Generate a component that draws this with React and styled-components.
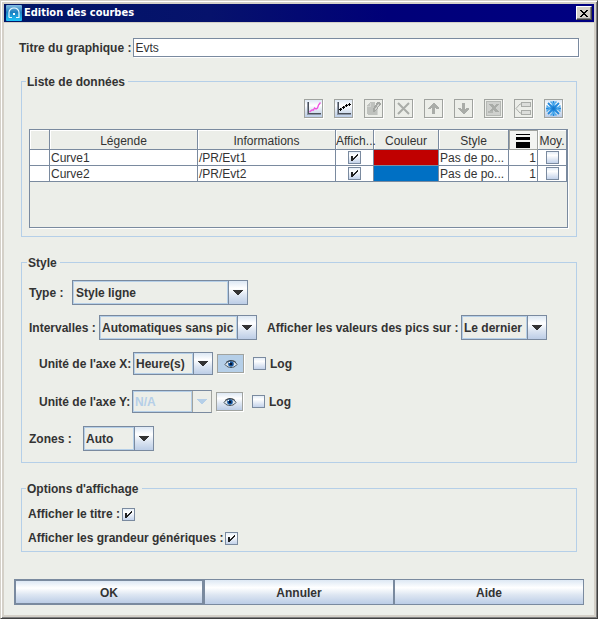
import React, { useState } from "react";
import styled, { createGlobalStyle, css } from "styled-components";

const c = {
  face: "#eceee9",
  frame: "#d4d0c8",
  line: "#7a8a9f",
  soft: "#b5cfe8",
  text: "#333333",
  grey: "#a0a39f",
};

const gloss = "linear-gradient(#dde8f4 0%, #ffffff 32%, #dde6f2 62%, #bccde6 100%)";

const Global = createGlobalStyle`
  * { box-sizing: border-box; }
  body { margin: 0; background: ${c.face}; }
  body, button, input, select {
    font: 700 12px/14px "Liberation Sans", Arial, sans-serif;
    color: ${c.text};
  }
`;

const Window = styled.div`
  min-height: 100vh;
  display: flex;
  flex-direction: column;
  background: ${c.face};
  border: 1px solid ${c.frame};
  border-right-color: #404040;
  border-bottom-color: #404040;
  box-shadow: inset 1px 1px 0 #fff, inset -1px -1px 0 #808080, inset 0 0 0 3px ${c.frame};
  padding: 3px;
`;

const TitleBar = styled.header`
  display: flex;
  align-items: center;
  gap: 2px;
  height: 18px;
  padding: 0 2px;
  color: #fff;
  background: linear-gradient(90deg, #001666 0%, #06126c 35%, #000078 65%, #000082 100%);
`;

const WindowTitle = styled.h1`
  flex: 1;
  margin: 0;
  font: 700 11px/18px "DejaVu Sans Condensed", "DejaVu Sans", sans-serif;
`;

const CloseButton = styled.button`
  display: grid;
  place-items: center;
  width: 16px;
  height: 14px;
  padding: 0;
  border: 1px solid;
  border-color: #fff #404040 #404040 #fff;
  background: ${c.frame};
  box-shadow: inset -1px -1px 0 #808080;
`;

const Body = styled.form`
  flex: 1;
  display: flex;
  flex-direction: column;
  margin: 0;
  padding: 15px 10px 10px;
  border-top: 1px solid ${c.frame};
`;

const TitleRow = styled.div`
  display: flex;
  align-items: center;
  gap: 2px;
  margin: 0 5px 15px;
`;

const TextInput = styled.input`
  flex: 1;
  min-width: 0;
  height: 19px;
  margin-bottom: 1px;
  padding: 0 1px;
  border: 1px solid ${c.line};
  border-radius: 0;
  outline: 0;
  background: #fff;
  box-shadow: 1px 1px 0 #fff;
  font-weight: 400;
`;

const Group = styled.fieldset`
  min-width: 0;
  margin: 0 7px 17px;
  padding: ${(p) => p.$pad};
  border: 1px solid ${c.soft};
`;

const Legend = styled.legend`
  margin-left: ${(p) => p.$inset || 0}px;
  padding: 2px 3px 0 1px;
`;

const Toolbar = styled.div`
  display: flex;
  justify-content: flex-end;
  gap: 11px;
  padding: 0 5px 11px 0;
`;

const IconButton = styled.button`
  display: grid;
  place-items: center;
  width: ${(p) => p.$w || 19}px;
  height: 19px;
  padding: 0;
  border: 1px solid ${c.grey};
  background: ${(p) => (p.$pressed ? c.soft : p.disabled ? c.face : gloss)};
  box-shadow: 1px 1px 0 #fff;
  svg { display: block; }
`;

const TableView = styled.div`
  min-height: 99px;
  border: 1px solid ${c.line};
  box-shadow: 1px 1px 0 #fff;
`;

const Table = styled.table`
  width: 100%;
  table-layout: fixed;
  border-collapse: separate;
  border-spacing: 0;
  font-size: 12px;
  font-weight: 400;
`;

const cell = css`
  border-right: 1px solid ${c.line};
  border-bottom: 1px solid ${c.line};
  white-space: nowrap;
`;

const Th = styled.th`
  ${cell}
  height: 20px;
  padding: 3px 0 0;
  font-weight: 400;
  text-align: center;
  box-shadow: inset 1px 1px 0 #fff;
  ${(p) => p.$raised && css`
    background: #f3f4f1;
    border-color: ${c.grey};
    box-shadow: inset 1px 1px 0 ${c.grey};
  `}
  svg { display: block; margin: auto; }
`;

const Td = styled.td`
  ${cell}
  height: 16px;
  padding: 1px 1px 0;
  line-height: 14px;
  text-align: ${(p) => p.$align || "left"};
  background: ${(p) => p.$fill || "#fff"};
`;

const Tick = styled.span`
  display: inline-grid;
  flex: none;
  width: 13px;
  height: 13px;
  vertical-align: top;
  input, svg { grid-area: 1 / 1; }
  input {
    appearance: none;
    width: 13px;
    height: 13px;
    margin: 0;
    border: 1px solid ${c.line};
    background: linear-gradient(#e4edf7, #fff 30%, #c3d2ea);
  }
  svg { pointer-events: none; visibility: hidden; }
  input:checked + svg { visibility: visible; }
`;

const Row = styled.div`
  display: flex;
  align-items: center;
  min-height: ${(p) => p.$h}px;
  margin-top: ${(p) => p.$top}px;
  padding-left: ${(p) => p.$indent || 0}px;
`;

const Label = styled.label`
  flex: none;
  width: ${(p) => (p.$w ? p.$w + "px" : "auto")};
  margin-left: ${(p) => p.$gap || 0}px;
  white-space: nowrap;
`;

const Combo = styled.span`
  display: grid;
  flex: none;
  width: ${(p) => p.$w}px;
  height: ${(p) => p.$h || 25}px;
  select, svg { grid-area: 1 / 1; }
  select {
    appearance: none;
    width: 100%;
    height: 100%;
    padding: 0 20px 0 ${(p) => p.$pad || 2}px;
    border: 1px solid ${c.line};
    border-radius: 0;
    outline: 0;
    opacity: 1;
    color: ${(p) => (p.$off ? c.soft : c.text)};
    background:
      linear-gradient(${(p) => (p.$off ? c.grey : c.line)} 0 0) right 18px top 0 / 1px 100% no-repeat,
      ${(p) => (p.$off ? `linear-gradient(${c.face}, ${c.face})` : gloss)} right / 18px 100% no-repeat,
      linear-gradient(${c.soft} 0 0) right 19px top 0 / 1px 100% no-repeat,
      linear-gradient(${c.soft} 0 0) top / 100% 1px no-repeat,
      linear-gradient(${c.soft} 0 0) bottom / 100% 1px no-repeat,
      linear-gradient(${c.soft} 0 0) left / 1px 100% no-repeat,
      ${c.face};
    ${(p) => p.$off && css`border-right-color: ${c.grey};`}
  }
  svg { place-self: center end; margin-right: 5px; pointer-events: none; }
`;

const Footer = styled.footer`
  display: grid;
  grid-template-columns: repeat(3, 1fr);
  margin-top: 10px;
`;

const Action = styled.button`
  height: 26px;
  padding: 2px 0 0;
  border: ${(p) => (p.$main ? 2 : 1)}px solid ${c.line};
  background: ${gloss};
`;

const Px = ({ w = 15, h = 15, children, ...rest }) => (
  <svg width={w} height={h} viewBox={`0 0 ${w} ${h}`} fill="none" shapeRendering="crispEdges" aria-hidden="true" {...rest}>
    {children}
  </svg>
);

const G = "#a9aca8";

const CurveIcon = () => (
  <Px>
    <path d="M1 1h1v13H1zM1 13h14v1H1z" fill="#8b95a5" />
    <path d="M2 1h1v11h12v1H2z" fill="#4a505a" />
    <path d="M3.500 11l2.500-2h1.500l1-2 1.500 1 1.500-1 1-3 2-2.500" stroke="#f050e0" strokeWidth="1.300" shapeRendering="auto" />
  </Px>
);
const PointsIcon = () => (
  <Px>
    <path d="M1 1h1v13H1zM1 13h14v1H1z" fill="#8b95a5" />
    <path d="M2 1h1v11h12v1H2z" fill="#4a505a" />
    <path d="M4 9l3-3 3-1 4-2" stroke="#666" shapeRendering="auto" />
    <path d="M3 8h3v1H3zM4 7h1v3H4zM6 6h3v1H6zM7 5h1v3H7zM9 4h3v1H9zM10 3h1v3h-1zM12 3h3v1h-3zM13 2h1v3h-1z" fill="#000" />
  </Px>
);
const EditIcon = () => (
  <Px w={17} h={17}>
    <path d="M2 5l3-3h5v3h3v10H3l-1-2z" fill="#bfc2be" />
    <path d="M12 2h2l2 2-5 7-3 1V9z" fill="#a3a6a2" />
    <path d="M5.500 3v3H2M10 10l4-6M12.500 15V9" stroke="#d2d4d1" />
  </Px>
);
const DeleteIcon = () => (
  <Px shapeRendering="auto">
    <path d="M2 2l11 11M13 2L2 13" stroke={G} strokeWidth="2" />
  </Px>
);
const UpIcon = () => (
  <Px><path d="M7 2h1l5 5v1h-2l-2-1v6H6V7L4 8H2V7z" fill={G} /></Px>
);
const DownIcon = () => (
  <Px><path d="M7 13h1l5-5V7h-2L9 8V2H6v6L4 7H2v1z" fill={G} /></Px>
);
const SheetIcon = () => (
  <Px w={17} h={17}>
    <path d="M1 1h15v15H1z" fill="#cfd1ce" />
    <path d="M1.500 1.500h14v14h-14z" stroke="#b6b9b5" />
    <path d="M4 4h4l1 2 2-2h3l-3 4 3 4h-4l-2-2-2 2H3l4-4z" fill={G} />
    <path d="M3 11h5v2H3z" fill="#b4b7b3" />
  </Px>
);
const TreeIcon = () => (
  <Px w={17}>
    <path d="M6.500 1.500h9v4h-9zM6.500 9.500h9v4h-9z" stroke={G} fill="#dcdedb" />
    <path d="M6 3H5L1 7.500 5 12h1" stroke={G} shapeRendering="auto" />
  </Px>
);
const FlakeIcon = () => (
  <Px w={17} h={17} shapeRendering="auto">
    <circle cx="8.500" cy="8.500" r="4.500" fill="#8ccaf5" />
    <path d="M8.500 1v15M1 8.500h15M3 3l11 11M14 3L3 14" stroke="#2389dc" strokeWidth="1.800" />
    <path d="M5.500 1.500l3 3 3-3M5.500 15.500l3-3 3 3M1.500 5.500l3 3-3 3M15.500 5.500l-3 3 3 3" stroke="#4ba9ec" strokeWidth="1.500" />
    <circle cx="8.500" cy="8.500" r="1.500" fill="#1678cd" />
  </Px>
);
const EyeIcon = () => (
  <Px w={14} h={10} shapeRendering="auto">
    <path d="M1 5.500C3 2.500 5 2 7 2s4.500.5 6 3.500C11 8 9 8.500 7 8.500S3 8 1 5.500z" fill="#dce6ee" stroke="#4c565e" />
    <path d="M2 3.500C5 .8 9.500.8 12 3.500" stroke="#39434c" />
    <circle cx="7" cy="5" r="2.800" fill="#15569e" />
    <circle cx="7" cy="5" r="1.300" fill="#06132d" />
    <path d="M5 3h1v1H5z" fill="#fff" />
  </Px>
);
const ArrowIcon = ({ off }) => (
  <Px w={10} h={5}>
    <path d="M0 0h10v1H9v1H8v1H7v1H6v1H4V4H3V3H2V2H1V1H0z" fill={off ? c.soft : c.text} />
  </Px>
);
const WidthIcon = () => (
  <Px w={14} h={14}><path d="M0 0h14v1H0zM0 3h14v3H0zM0 8h14v6H0z" fill="#000" /></Px>
);
const CheckIcon = () => (
  <Px w={13} h={13}>
    <path d="M3 5h2v5H3zM9 3h1v2H9zM8 4h1v2H8zM7 5h1v2H7zM6 6h1v2H6zM5 7h1v2H5z" fill="#222" />
  </Px>
);
const CloseIcon = () => (
  <Px w={8} h={7}>
    <path d="M0 0h2v1h1v1h2V1h1V0h2v1H7v1H6v1H5v1h1v1h1v1h1v1H6V6H5V5H3v1H2v1H0V6h1V5h1V4h1V3H2V2H1V1H0z" fill="#000" />
  </Px>
);
const AppIcon = () => (
  <Px w={16} h={16} shapeRendering="auto">
    <defs>
      <linearGradient id="app" x1="0" y1="0" x2="0" y2="1">
        <stop stopColor="#84bde2" />
        <stop offset=".45" stopColor="#1c7fc0" />
        <stop offset="1" stopColor="#1ec5fa" />
      </linearGradient>
    </defs>
    <rect width="16" height="16" rx="1" fill="url(#app)" />
    <path d="M3 12.500V7.500a5 4.500 0 0110 0v5h-3M6 12.500H3" stroke="#e8f8ff" strokeWidth="1.200" />
    <path d="M7 8h2v2H7z" fill="#fff" />
  </Px>
);

function Check({ initial = false, ...rest }) {
  const [on, setOn] = useState(initial);
  return (
    <Tick>
      <input type="checkbox" checked={on} onChange={(e) => setOn(e.target.checked)} {...rest} />
      <CheckIcon />
    </Tick>
  );
}

function Select({ id, value, w, h, pad, off }) {
  return (
    <Combo $w={w} $h={h} $pad={pad} $off={off}>
      <select id={id} disabled={off} defaultValue={value}>
        <option>{value}</option>
      </select>
      <ArrowIcon off={off} />
    </Combo>
  );
}

const tools = [
  ["Courbe", CurveIcon, true],
  ["Points", PointsIcon, true],
  ["Modifier", EditIcon],
  ["Supprimer", DeleteIcon],
  ["Monter", UpIcon],
  ["Descendre", DownIcon],
  ["Exporter", SheetIcon],
  ["Regrouper", TreeIcon],
  ["Figer", FlakeIcon, true],
];

const columns = [20, 148, 138, 38, 65, 70, 29, 29];

const curves = [
  { name: "Curve1", info: "/PR/Evt1", color: "#c00000" },
  { name: "Curve2", info: "/PR/Evt2", color: "#0070c4" },
];

function Axis({ axis, value, off, top, labelWidth }) {
  return (
    <Row $h={23} $top={top} $indent={10}>
      <Label htmlFor={`unit${axis}`} $w={labelWidth}>Unité de l'axe {axis}:</Label>
      <Select id={`unit${axis}`} value={value} w={80} h={23} off={off} />
      <Label as="span" $gap={4}>
        <IconButton type="button" $w={27} $pressed={!off} aria-label={`Afficher l'axe ${axis}`}>
          <EyeIcon />
        </IconButton>
      </Label>
      <Label as="span" $gap={9} $w={17}><Check id={`log${axis}`} /></Label>
      <Label htmlFor={`log${axis}`}>Log</Label>
    </Row>
  );
}

export default function App() {
  return (
    <>
      <Global />
      <Window>
        <TitleBar>
          <AppIcon />
          <WindowTitle>Edition des courbes</WindowTitle>
          <CloseButton type="button" aria-label="Fermer"><CloseIcon /></CloseButton>
        </TitleBar>
        <Body onSubmit={(e) => e.preventDefault()}>
          <TitleRow>
            <Label htmlFor="title">Titre du graphique :</Label>
            <TextInput id="title" defaultValue="Evts" />
          </TitleRow>

          <Group $pad="10px 8px 8px 7px">
            <Legend $inset={-3}>Liste de données</Legend>
            <Toolbar>
              {tools.map(([name, Icon, enabled]) => (
                <IconButton key={name} type="button" disabled={!enabled} aria-label={name}><Icon /></IconButton>
              ))}
            </Toolbar>
            <TableView>
              <Table>
                <colgroup>{columns.map((w, i) => <col key={i} width={w} />)}</colgroup>
                <thead>
                  <tr>
                    <Th />
                    <Th>Légende</Th>
                    <Th>Informations</Th>
                    <Th>Affich...</Th>
                    <Th>Couleur</Th>
                    <Th>Style</Th>
                    <Th $raised aria-label="Épaisseur"><WidthIcon /></Th>
                    <Th>Moy.</Th>
                  </tr>
                </thead>
                <tbody>
                  {curves.map((r) => (
                    <tr key={r.name}>
                      <Td />
                      <Td>{r.name}</Td>
                      <Td>{r.info}</Td>
                      <Td $align="center"><Check initial aria-label={`Afficher ${r.name}`} /></Td>
                      <Td $fill={r.color} />
                      <Td>Pas de po...</Td>
                      <Td $align="right">1</Td>
                      <Td $align="center"><Check aria-label={`Moyenne ${r.name}`} /></Td>
                    </tr>
                  ))}
                </tbody>
              </Table>
            </TableView>
          </Group>

          <Group $pad="0 7px 11px">
            <Legend $inset={-2}>Style</Legend>
            <Row $h={25} $top={10}>
              <Label htmlFor="type" $w={43}>Type :</Label>
              <Select id="type" value="Style ligne" w={176} pad={3} />
            </Row>
            <Row $h={25} $top={10}>
              <Label htmlFor="intervals" $w={70}>Intervalles :</Label>
              <Select id="intervals" value="Automatiques sans pic" w={158} />
              <Label htmlFor="peaks" $w={194} $gap={10}>Afficher les valeurs des pics sur :</Label>
              <Select id="peaks" value="Le dernier" w={86} />
            </Row>
            <Axis axis="X" value="Heure(s)" top={12} labelWidth={94} />
            <Axis axis="Y" value="N/A" off top={15} labelWidth={93} />
            <Row $h={25} $top={13}>
              <Label htmlFor="zones" $w={54}>Zones :</Label>
              <Select id="zones" value="Auto" w={71} />
            </Row>
          </Group>

          <Group $pad="0 6px 6px">
            <Legend $inset={-2}>Options d'affichage</Legend>
            <Row $h={14} $top={11}>
              <Label htmlFor="showTitle" $w={94}>Afficher le titre :</Label>
              <Check id="showTitle" initial />
            </Row>
            <Row $h={14} $top={10}>
              <Label htmlFor="showUnits" $w={197}>Afficher les grandeur génériques :</Label>
              <Check id="showUnits" initial />
            </Row>
          </Group>

          <Footer>
            <Action $main type="submit">OK</Action>
            <Action type="button">Annuler</Action>
            <Action type="button">Aide</Action>
          </Footer>
        </Body>
      </Window>
    </>
  );
}
